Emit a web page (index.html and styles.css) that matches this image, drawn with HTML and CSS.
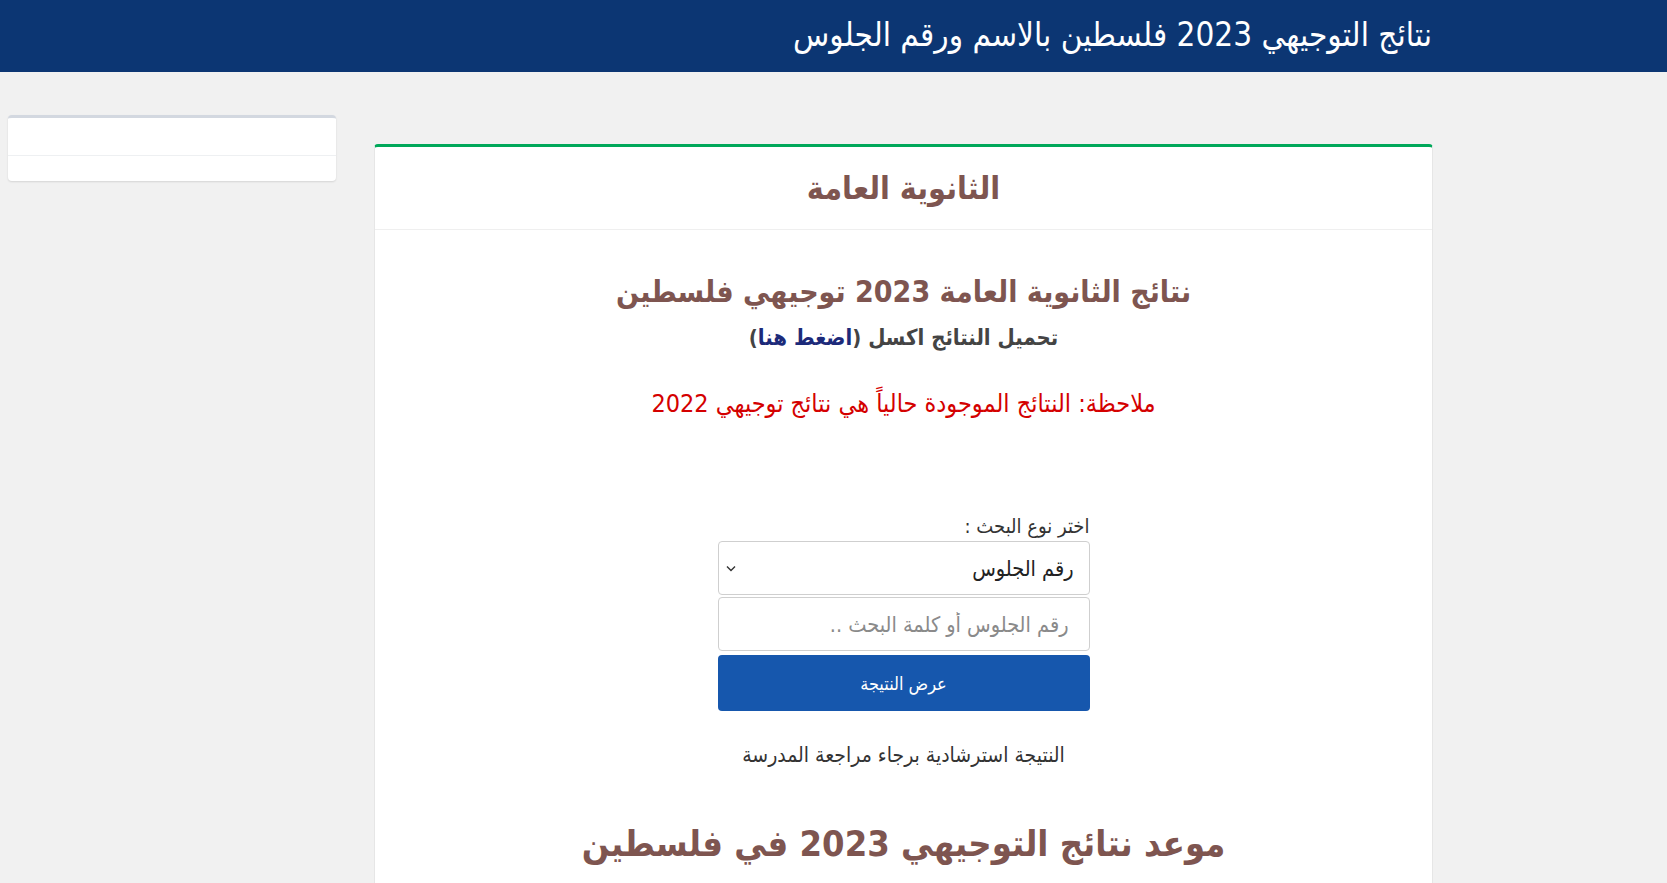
FILE: index.html
```html
<!DOCTYPE html>
<html lang="ar" dir="rtl">
<head>
<meta charset="utf-8">
<title>نتائج التوجيهي 2023 فلسطين</title>
<link rel="stylesheet" href="styles.css">
</head>
<body>
<header class="topbar">
  <div class="topbar-inner">
    <span class="site-title">نتائج التوجيهي 2023 فلسطين بالاسم ورقم الجلوس</span>
  </div>
</header>
<div class="page">
  <main class="main-card">
    <div class="card-head">
      <h2 class="card-title">الثانوية العامة</h2>
    </div>
    <div class="card-body">
      <h1 class="results-title">نتائج الثانوية العامة 2023 توجيهي فلسطين</h1>
      <p class="download">تحميل النتائج اكسل (<a href="#" class="download-link">اضغط هنا</a>)</p>
      <p class="note">ملاحظة: النتائج الموجودة حالياً هي نتائج توجيهي 2022</p>
      <form class="search-form">
        <label class="form-label" for="type">اختر نوع البحث :</label>
        <div class="select-wrap">
          <select id="type" class="form-select">
            <option>رقم الجلوس</option>
            <option>الاسم</option>
          </select>
          <svg class="chev" width="10" height="7" viewBox="0 0 10 7"><path d="M1 1.5 L5 5.5 L9 1.5" fill="none" stroke="#333" stroke-width="1.4"/></svg>
        </div>
        <input class="form-input" type="text" placeholder="رقم الجلوس أو كلمة البحث ..">
        <button type="button" class="btn-submit">عرض النتيجة</button>
      </form>
      <p class="disclaimer">النتيجة استرشادية برجاء مراجعة المدرسة</p>
      <h2 class="date-title">موعد نتائج التوجيهي 2023 في فلسطين</h2>
      <p class="intro">أعلنت وزارة التربية والتعليم الفلسطينية عن موعد نتائج التوجيهي 2023</p>
    </div>
  </main>
  <aside class="side-card">
    <div class="side-row side-row-top"></div>
    <div class="side-row"></div>
  </aside>
</div>
</body>
</html>
```

FILE: styles.css
```css
* { box-sizing: border-box; }
html, body { margin: 0; padding: 0; }
body {
  background: #f1f1f1;
  font-family: "DejaVu Sans Condensed", "DejaVu Sans", sans-serif;
  color: #333;
}
.topbar {
  background: #0c3673;
  height: 72px;
  display: flex;
  align-items: center;
  padding-right: 235px;
  padding-bottom: 4px;
}
.site-title {
  color: #fff;
  font-size: 33px;
  line-height: 1;
}
.page {
  display: flex;
  align-items: flex-start;
  gap: 38px;
  padding-right: 234px;
  padding-left: 8px;
}
.main-card {
  width: 1059px;
  flex: none;
  margin-top: 72px;
  background: #fff;
  border: 1px solid #e6e6e6;
  border-top: 3px solid #00a85a;
  border-radius: 4px 4px 0 0;
}
.card-head {
  height: 83px;
  display: flex;
  align-items: center;
  justify-content: center;
  border-bottom: 1px solid #efefef;
}
.card-title {
  margin: 0;
  font-size: 32px;
  line-height: 40px;
  font-weight: bold;
  color: #7e5550;
}
.card-body {
  display: flex;
  flex-direction: column;
  align-items: center;
  padding-top: 42px;
}
.results-title {
  margin: 0;
  font-size: 30px;
  line-height: 40px;
  font-weight: bold;
  color: #7e5550;
}
.download {
  margin: 11px 0 0;
  font-size: 22px;
  line-height: 30px;
  font-weight: bold;
  color: #444;
}
.download-link {
  color: #1c2a7a;
  text-decoration: none;
}
.note {
  margin: 36px 0 0;
  font-size: 25px;
  line-height: 30px;
  color: #d40000;
}
.search-form {
  width: 372px;
  margin-top: 94px;
  display: flex;
  flex-direction: column;
}
.form-label {
  font-size: 20px;
  line-height: 26px;
  color: #333;
  margin-bottom: 2px;
}
.select-wrap {
  position: relative;
}
.form-select {
  width: 100%;
  height: 54px;
  appearance: none;
  -webkit-appearance: none;
  background: #fff;
  border: 1px solid #cfcfcf;
  border-radius: 4px;
  padding: 0 15px 0 30px;
  font-family: inherit;
  font-size: 21.5px;
  color: #222;
}
.chev {
  position: absolute;
  left: 8px;
  top: 24px;
}
.form-input {
  width: 100%;
  height: 54px;
  margin-top: 2px;
  background: #fff;
  border: 1px solid #cfcfcf;
  border-radius: 4px;
  padding: 0 20px;
  font-family: inherit;
  font-size: 21.5px;
  color: #222;
}
.form-input::placeholder { color: #8a8a8a; }
.btn-submit {
  height: 56px;
  margin-top: 4px;
  background: #1657ad;
  border: none;
  border-radius: 4px;
  color: #fff;
  font-family: inherit;
  font-size: 18px;
}
.disclaimer {
  margin: 30px 0 0;
  font-size: 21px;
  line-height: 28px;
  color: #333;
}
.date-title {
  margin: 48px 0 0;
  font-size: 36px;
  line-height: 54px;
  font-weight: bold;
  color: #7e5550;
}
.intro {
  margin: 14px 0 30px;
  font-size: 20px;
  color: #333;
}
.side-card {
  width: 328px;
  flex: none;
  margin-top: 43px;
  background: #fff;
  border-top: 3px solid #d3d8e0;
  border-radius: 4px;
  box-shadow: 0 1px 2px rgba(0,0,0,0.12);
}
.side-row-top {
  height: 38px;
  border-bottom: 1px solid #eef0f2;
}
.side-row:last-child { height: 25px; }
```
